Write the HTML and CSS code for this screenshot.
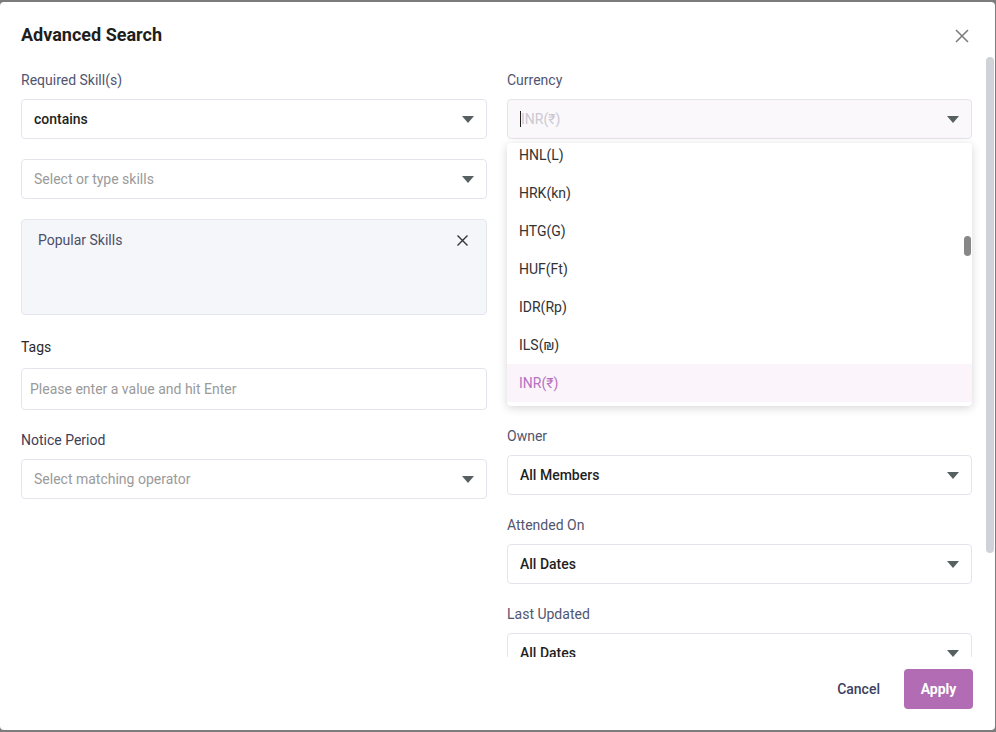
FILE: index.html
```html
<!DOCTYPE html>
<html lang="en">
<head>
<meta charset="utf-8">
<title>Advanced Search</title>
<link rel="stylesheet" href="styles.css">
</head>
<body>
<div class="modal">
  <div class="modal-header">
    <h2 class="title">Advanced Search</h2>
    <button class="close-btn" aria-label="Close">
      <svg width="14" height="14" viewBox="0 0 14 14"><path d="M1 1L13 13M13 1L1 13" stroke="#7a7a7a" stroke-width="1.5" fill="none"/></svg>
    </button>
  </div>
  <div class="modal-body">
    <div class="grid">
      <div class="col">
        <div class="field">
          <div class="label">Required Skill(s)</div>
          <div class="select"><span class="value">contains</span><svg class="arrow" width="12" height="7" viewBox="0 0 12 7"><path d="M0 0H12L6 7Z"/></svg></div>
        </div>
        <div class="field">
          <div class="select"><span class="placeholder">Select or type skills</span><svg class="arrow" width="12" height="7" viewBox="0 0 12 7"><path d="M0 0H12L6 7Z"/></svg></div>
        </div>
        <div class="popular">
          <span>Popular Skills</span>
          <svg class="pop-x" width="11" height="11" viewBox="0 0 11 11"><path d="M0.5 0.5L10.5 10.5M10.5 0.5L0.5 10.5" stroke="#333" stroke-width="1.4" fill="none"/></svg>
        </div>
        <div class="field">
          <div class="label label-dark label-tags">Tags</div>
          <div class="input"><span class="placeholder">Please enter a value and hit Enter</span></div>
        </div>
        <div class="field">
          <div class="label label-mid">Notice Period</div>
          <div class="select"><span class="placeholder">Select matching operator</span><svg class="arrow" width="12" height="7" viewBox="0 0 12 7"><path d="M0 0H12L6 7Z"/></svg></div>
        </div>
      </div>
      <div class="col">
        <div class="field">
          <div class="label">Currency</div>
          <div class="anchor">
            <div class="select select-open"><span class="caret"></span><span class="muted">INR(₹)</span><svg class="arrow" width="12" height="7" viewBox="0 0 12 7"><path d="M0 0H12L6 7Z"/></svg></div>
            <div class="dropdown">
              <ul class="options">
                <li>HNL(L)</li>
                <li>HRK(kn)</li>
                <li>HTG(G)</li>
                <li>HUF(Ft)</li>
                <li>IDR(Rp)</li>
                <li>ILS(₪)</li>
                <li class="active">INR(₹)</li>
              </ul>
              <div class="dd-thumb"></div>
            </div>
          </div>
        </div>
        <div class="field covered">
          <div class="label"></div>
          <div class="select"></div>
        </div>
        <div class="field covered">
          <div class="label"></div>
          <div class="select"></div>
        </div>
        <div class="field covered">
          <div class="label"></div>
          <div class="select"></div>
        </div>
        <div class="field">
          <div class="label">Owner</div>
          <div class="select"><span class="value">All Members</span><svg class="arrow" width="12" height="7" viewBox="0 0 12 7"><path d="M0 0H12L6 7Z"/></svg></div>
        </div>
        <div class="field">
          <div class="label">Attended On</div>
          <div class="select"><span class="value">All Dates</span><svg class="arrow" width="12" height="7" viewBox="0 0 12 7"><path d="M0 0H12L6 7Z"/></svg></div>
        </div>
        <div class="field">
          <div class="label">Last Updated</div>
          <div class="select"><span class="value">All Dates</span><svg class="arrow" width="12" height="7" viewBox="0 0 12 7"><path d="M0 0H12L6 7Z"/></svg></div>
        </div>
      </div>
    </div>
    <div class="scroll-thumb"></div>
  </div>
  <div class="modal-footer">
    <button class="btn-cancel">Cancel</button>
    <button class="btn-apply">Apply</button>
  </div>
</div>
</body>
</html>
```
FILE: styles.css
```css
* { box-sizing: border-box; }
html, body {
  margin: 0;
  padding: 0;
  width: 996px;
  height: 732px;
  overflow: hidden;
  background: #7c7c7c;
  font-family: Roboto, "Liberation Sans", Arial, sans-serif;
}
.modal {
  margin-top: 2px;
  width: 995px;
  height: 728px;
  background: #fff;
  border-radius: 4px;
  display: flex;
  flex-direction: column;
  overflow: hidden;
}
.modal-header {
  height: 54px;
  flex: none;
  display: flex;
  align-items: flex-start;
  justify-content: space-between;
  padding: 23px 26px 0 21px;
}
.title {
  margin: 0;
  font-size: 18px;
  line-height: 20px;
  font-weight: 700;
  color: #1e1e1e;
}
.close-btn {
  border: 0;
  background: none;
  padding: 0;
  margin-top: 4px;
  width: 14px;
  height: 14px;
  display: block;
}
.close-btn svg { display: block; }
.modal-body {
  position: relative;
  flex: 1;
  overflow: hidden;
  padding: 14px 23px 0 21px;
}
.grid {
  display: grid;
  grid-template-columns: 466px 465px;
  column-gap: 20px;
  align-items: start;
}
.col { display: flex; flex-direction: column; }
.field { margin-bottom: 20px; }
.label {
  font-size: 14px;
  line-height: 20px;
  height: 20px;
  color: #51556f;
  margin-bottom: 9px;
}
.label-dark { color: #2a2a2a; }
.label-mid { color: #3d4057; }
.label-tags { margin-bottom: 11px; }
.select, .input {
  height: 40px;
  border: 1px solid #e3e5ec;
  border-radius: 4px;
  background: #fff;
  display: flex;
  align-items: center;
  padding: 0 12px;
  font-size: 14px;
}
.input { height: 42px; padding: 0 8px; }
.select .arrow { margin-left: auto; fill: #566060; display: block; }
.value { font-weight: 500; color: #1f1f1f; }
.placeholder { color: #9a9a9a; }
.select-open { background: #fbf8fb; border-color: #e6e2ea; }
.caret {
  width: 1px;
  height: 16px;
  background: #222;
}
.muted { color: #cac8d3; }
.popular {
  height: 96px;
  margin-bottom: 22px;
  background: #f5f6fa;
  border: 1px solid #e4e6ee;
  border-radius: 4px;
  padding: 10px 18px 0 16px;
  display: flex;
  align-items: flex-start;
  justify-content: space-between;
  font-size: 14px;
  line-height: 20px;
  color: #4b4f69;
}
.pop-x { margin-top: 5px; display: block; }
.anchor { position: relative; }
.dropdown {
  position: absolute;
  top: calc(100% + 4px);
  left: 0;
  right: 0;
  height: 263px;
  background: #fff;
  border-radius: 4px;
  box-shadow: 0 2px 10px rgba(0, 0, 0, 0.16);
  overflow: hidden;
  z-index: 5;
}
.options {
  list-style: none;
  margin: -7px 0 0;
  padding: 0;
}
.options li {
  height: 38px;
  line-height: 38px;
  padding-left: 12px;
  font-size: 14px;
  color: #333;
}
.options li.active {
  background: #fbf5fb;
  color: #b671c2;
}
.dd-thumb {
  position: absolute;
  right: 1px;
  top: 93px;
  width: 7px;
  height: 20px;
  border-radius: 4px;
  background: #878787;
}
.scroll-thumb {
  position: absolute;
  right: 1px;
  top: 1px;
  width: 8px;
  height: 496px;
  border-radius: 4px;
  background: #cfd2d6;
}
.modal-footer {
  flex: none;
  height: 73px;
  display: flex;
  justify-content: flex-end;
  align-items: flex-start;
  gap: 8px;
  padding: 12px 22px 0 0;
}
.btn-cancel {
  height: 40px;
  border: 0;
  background: none;
  padding: 0 16px;
  font-family: inherit;
  font-size: 14px;
  font-weight: 500;
  color: #3d4160;
}
.btn-apply {
  height: 40px;
  width: 69px;
  border: 0;
  border-radius: 4px;
  background: #b16cb3;
  color: #fff;
  font-family: inherit;
  font-size: 14px;
  font-weight: 700;
  padding: 0;
}
```
